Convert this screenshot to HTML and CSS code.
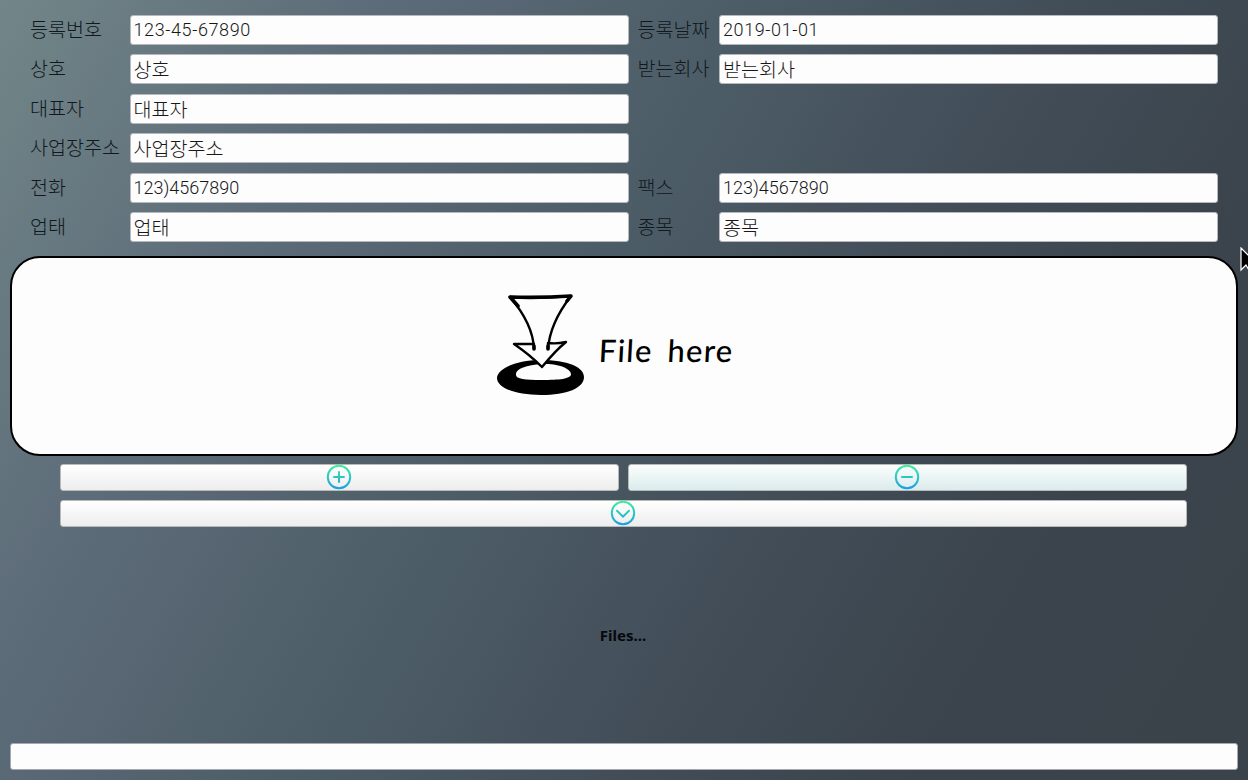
FILE: index.html
```html
<!DOCTYPE html>
<html lang="ko">
<head>
<meta charset="utf-8">
<title>Files</title>
<link rel="stylesheet" href="styles.css">
</head>
<body>
<main class="page">
  <form class="form">
    <label>등록번호</label><input class="num dashed" value="123-45-67890"><label>등록날짜</label><input class="num dashed" value="2019-01-01">
    <label>상호</label><input value="상호"><label>받는회사</label><input value="받는회사">
    <label>대표자</label><input value="대표자"><span></span><span></span>
    <label>사업장주소</label><input value="사업장주소"><span></span><span></span>
    <label>전화</label><input class="num" value="123)4567890"><label>팩스</label><input class="num" value="123)4567890">
    <label>업태</label><input value="업태"><label>종목</label><input value="종목">
  </form>
  <section class="drop">
    <svg class="arrow" width="90" height="104" viewBox="0 0 90 104">
      <path fill="#000" fill-rule="evenodd" d="M44 68C20 68 1 77 1 86C1 96 20 103 45 103C71 103 88 96 88 85C88 75 72 68 44 68ZM46 72C63 71 75 77 75 82C75 87 63 88 46 88C29 88 20 87 20 83C19 77 30 73 46 72Z"/>
      <path fill="#fdfdfd" d="M14 5L75 4Q54 32 53 52L70 51L46 75L18 53L38 52Q37 32 14 5Z"/>
      <path fill="none" stroke="#000" stroke-width="2.4" stroke-linecap="round" stroke-linejoin="round" d="M38 57Q37 32 14 5Q44 7 75 4Q54 31 52 57V51Q61 52 70 50Q60 58 46 75Q34 63 18 52H38"/>
      <path fill="none" stroke="#000" stroke-width="3.6" stroke-linecap="round" stroke-linejoin="round" d="M22 14L14 5Q44 6 75 4L71 9M38 54V57M52 54V57"/>
    </svg>
    <span class="drop-text">File here</span>
  </section>
  <section class="actions">
    <button type="button"><svg class="icon" viewBox="0 0 26 26"><defs><linearGradient id="g" gradientUnits="userSpaceOnUse" x1="0" y1="0" x2="0" y2="26"><stop stop-color="#42f29b"/><stop offset="1" stop-color="#159be8"/></linearGradient></defs><path d="M13 1.8a11.2 11.2 0 1 0 0 22.4a11.2 11.2 0 1 0 0-22.4M13 8v10M8 13h10"/></svg></button>
    <button type="button" class="hover"><svg class="icon" viewBox="0 0 26 26"><path d="M13 1.8a11.2 11.2 0 1 0 0 22.4a11.2 11.2 0 1 0 0-22.4M8 12.99L18 13.01"/></svg></button>
    <button type="button" class="wide"><svg class="icon" viewBox="0 0 26 26"><path d="M13 1.8a11.2 11.2 0 1 0 0 22.4a11.2 11.2 0 1 0 0-22.4M7 10.8l6 5.8l6-5.8"/></svg></button>
  </section>
  <section class="files">Files...</section>
  <div class="status"></div>
</main>
<svg class="cursor" width="18" height="26" viewBox="0 0 18 26"><path fill="#000" stroke="#fff" stroke-width="1.2" d="M1 1V23L6 18L10 25L13 23L10 17H17Z"/></svg>
</body>
</html>
```
FILE: styles.css
```css
* { box-sizing: border-box; }
body {
  margin: 0;
  height: 780px;
  overflow: hidden;
  background: linear-gradient(120deg, #728688 0%, #5d6c79 22%, #4c5c66 45%, #424d58 63%, #3b444c 80%, #3a434a 100%);
  font-family: "Liberation Sans", "Noto Sans CJK KR", sans-serif;
}
.page { height: 780px; padding: 10px; display: flex; flex-direction: column; }
.form {
  display: grid;
  grid-template-columns: 99.5px 499px 90.5px 499px;
  grid-auto-rows: 30px;
  row-gap: 9.4px;
  padding: 5px 20px 0;
  height: 246px;
  flex: none;
}
label, input { font: 300 19.6px "Noto Sans CJK KR", sans-serif; }
label { color: #101820; line-height: 28px; white-space: nowrap; }
label:nth-child(4n + 3) { padding-left: 9px; }
input {
  min-width: 0;
  height: 30px;
  border: 1px solid #b6b8bd;
  border-radius: 3px;
  padding: 0 3px 1px;
  background: #fdfdfd;
  color: #181818;
}
.num { font: 300 18px Roboto, "Liberation Sans", sans-serif; }
.dashed { letter-spacing: 0.6px; }
.drop {
  height: 200px;
  flex: none;
  border: 2px solid #000;
  border-radius: 30px;
  background: #fdfdfd;
  display: flex;
  align-items: flex-start;
  padding: 34px 0 0 484px;
}
.drop-text { margin: 39px 0 0 13px; font: 500 31px/38px Lato, sans-serif; letter-spacing: 1.2px; word-spacing: 6px; color: #000; transform: skewX(-3deg); white-space: nowrap; }
.actions {
  display: grid;
  grid-template-columns: 559px 559px;
  grid-auto-rows: 27px;
  gap: 9px;
  padding: 8px 50px 0;
}
button {
  border: 1px solid #b9b9b8;
  border-radius: 3px;
  padding: 0;
  background: linear-gradient(#fff, #ededee);
  display: grid;
  place-items: center;
}
.hover { background: linear-gradient(#fafefd, #dcebed); }
.wide { grid-column: 1 / 3; }
.icon { width: 26px; height: 26px; margin: -1px 0 0 -1px; fill: none; stroke: url(#g); stroke-width: 2; stroke-linecap: round; }
.files { flex: 1; display: grid; place-items: center; padding-right: 2px; font: bold 15px/18px "Noto Sans", sans-serif; color: #05080b; }
.status { height: 27px; flex: none; border: 1px solid #a5a8b1; border-radius: 3px; background: #fdfdfd; }
.cursor { position: absolute; left: 1240px; top: 247px; }
```
